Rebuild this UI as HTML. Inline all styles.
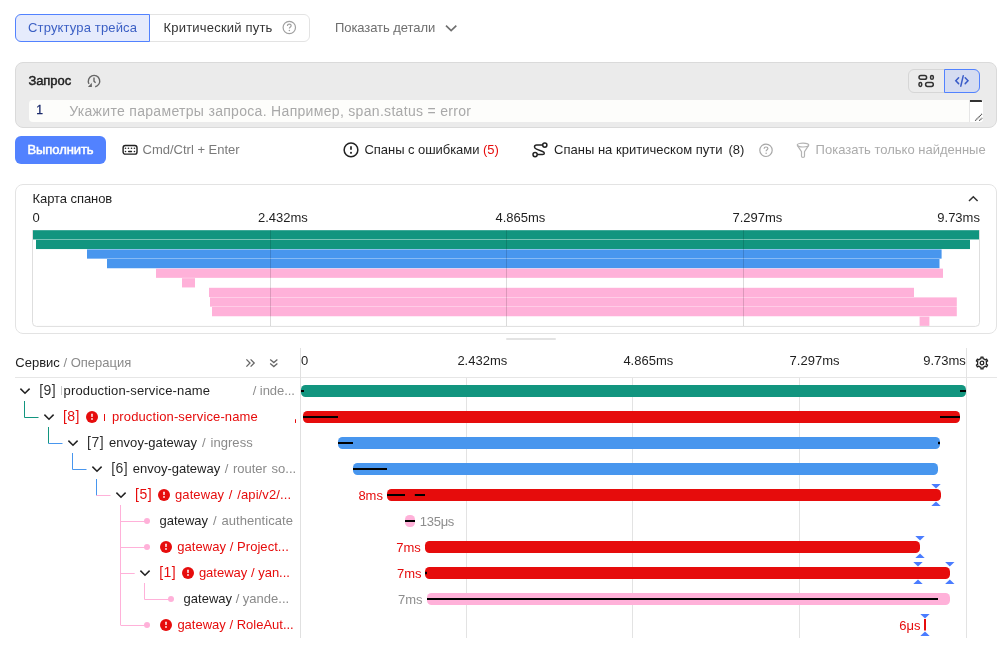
<!DOCTYPE html>
<html><head><meta charset="utf-8">
<style>
*{box-sizing:border-box;margin:0;padding:0}
html,body{width:1008px;height:648px;overflow:hidden;background:#fff;font-family:"Liberation Sans",sans-serif;color:#1f1f1f;font-size:13px}
.a{position:absolute;white-space:nowrap;line-height:16px}
svg{position:absolute;left:0;top:0;overflow:visible}
body{-webkit-font-smoothing:antialiased}
</style></head><body><div style="position:absolute;left:0;top:0;width:1008px;height:648px;will-change:transform">
<div class="a" style="left:15px;top:14px;width:295px;height:28px;border:1px solid #e3e3e3;border-radius:6px"></div>
<div class="a" style="left:15px;top:14px;width:135px;height:28px;background:#e6ebfc;border:1px solid #5282ff;border-radius:6px 0 0 6px"></div>
<div class="a" style="left:28px;top:20.00px;color:#3b5fc4;font-size:13px;font-weight:400;letter-spacing:0.15px">Структура трейса</div>
<div class="a" style="left:163.5px;top:20.00px;color:#333;font-size:13px;font-weight:400;letter-spacing:0.2px">Критический путь</div>
<svg class="a" style="left:282px;top:20.4px" width="15" height="15" viewBox="0 0 15 15"><circle cx="7.3" cy="7.5" r="6.2" fill="none" stroke="#a0a0a0" stroke-width="1.2"/><path d="M5.4 5.9 C5.4 4.8 6.2 4.2 7.3 4.2 C8.4 4.2 9.2 4.9 9.2 5.8 C9.2 6.9 7.4 7 7.4 8.4" fill="none" stroke="#a0a0a0" stroke-width="1.2"/><circle cx="7.4" cy="10.4" r="0.75" fill="#a0a0a0"/></svg>
<div class="a" style="left:335px;top:20.00px;color:#6e6e6e;font-size:13px;font-weight:400;letter-spacing:-0.07px">Показать детали</div>
<svg style="left:444px;top:22px" width="14" height="10" viewBox="0 0 14 10"><path d="M2 3.7 L7.15 8.5 L12.3 3.7" fill="none" stroke="#6f6f6f" stroke-width="1.7"/></svg>
<div class="a" style="left:15px;top:62px;width:982px;height:66px;background:#ebebeb;border:1px solid #dadada;border-radius:8px"></div>
<div class="a" style="left:28.4px;top:73.00px;color:#1f1f1f;font-size:13px;font-weight:400;letter-spacing:-0.05px;-webkit-text-stroke:0.45px #1f1f1f">Запрос</div>
<svg style="left:84px;top:71px" width="20" height="20" viewBox="0 0 20 20"><path d="M11.2 15.7 A5.7 5.7 0 1 0 5.0 12.8" fill="none" stroke="#666" stroke-width="1.4"/><path d="M3.9 16 H7.9 V11.8 Z" fill="#666"/><path d="M10 6.6 V10.2 L11.6 11.8" fill="none" stroke="#666" stroke-width="1.4"/></svg>
<div class="a" style="left:908px;top:69px;width:72px;height:24px;border:1px solid #d6d6d6;border-radius:6px;background:#ececec"></div>
<div class="a" style="left:944px;top:69px;width:36px;height:24px;border:1px solid #5282ff;border-radius:0 6px 6px 0;background:#d5dcf1"></div>
<svg style="left:917px;top:74px" width="20" height="14" viewBox="0 0 20 14"><g fill="none" stroke="#333" stroke-width="1.5"><rect x="2" y="1.5" width="7.6" height="3.8" rx="1.9"/><rect x="13.6" y="1.5" width="2.7" height="3.8" rx="1.35"/><rect x="2" y="8.6" width="2.7" height="3.8" rx="1.35"/><rect x="8.6" y="8.6" width="7.7" height="3.8" rx="1.9"/></g></svg>
<svg style="left:954px;top:74px" width="16" height="14" viewBox="0 0 16 14"><g fill="none" stroke="#3a5cc8" stroke-width="1.5" stroke-linecap="round"><path d="M4.6 3.8 L1.8 6.8 L4.6 9.6"/><path d="M11.2 3.8 L14 6.8 L11.2 9.6"/><path d="M9.2 1.8 L6.8 12.2"/></g></svg>
<div class="a" style="left:28.5px;top:99.5px;width:954.5px;height:22.7px;background:#fdfdfb;border-radius:4px"></div>
<div class="a" style="left:969px;top:100px;width:14px;height:22px;background:#fff;border-left:1px solid #e6e6e6;border-radius:0 3px 3px 0"></div>
<div class="a" style="left:970px;top:100px;width:12px;height:2px;background:#333;border-radius:0 1px 0 0"></div>
<svg style="left:970px;top:112px" width="13" height="10" viewBox="0 0 13 10"><path d="M5.2 8.7 L12 1.9 M9.2 8.7 L12.3 5.9" stroke="#444" stroke-width="1.1" stroke-dasharray="1.2 0.5"/></svg>
<div class="a" style="left:36.3px;top:102.00px;color:#1b2a6b;font-size:12px;font-weight:400;-webkit-text-stroke:0.3px #1b2a6b">1</div>
<div class="a" style="left:69.2px;top:103.00px;color:#a9a9a9;font-size:14px;font-weight:400;letter-spacing:0.31px">Укажите параметры запроса. Например, span.status = error</div>
<div class="a" style="left:15px;top:136px;width:91px;height:28px;background:#5282ff;border-radius:6px"></div>
<div class="a" style="left:27.5px;top:142.00px;color:#fff;font-size:13px;font-weight:400;letter-spacing:-0.08px;-webkit-text-stroke:0.5px #fff">Выполнить</div>
<svg style="left:122px;top:144px" width="16" height="12" viewBox="0 0 16 12"><rect x="1.1" y="1.5" width="13.9" height="8.6" rx="2.2" fill="none" stroke="#222" stroke-width="1.4"/><g fill="#222"><circle cx="3.5" cy="4.3" r="0.8"/><circle cx="6.45" cy="4.3" r="0.8"/><circle cx="9.5" cy="4.3" r="0.8"/><circle cx="12.45" cy="4.3" r="0.8"/><circle cx="3.5" cy="7.5" r="0.8"/><circle cx="12.45" cy="7.5" r="0.8"/></g><path d="M6.6 7.5 H9.5" stroke="#222" stroke-width="1.3" stroke-linecap="round"/></svg>
<div class="a" style="left:142.5px;top:142.00px;color:#7a7a7a;font-size:13px;font-weight:400;">Cmd/Ctrl + Enter</div>
<svg style="left:343px;top:142px" width="16" height="16" viewBox="0 0 16 16"><circle cx="8" cy="7.9" r="6.85" fill="none" stroke="#222" stroke-width="1.5"/><path d="M8 4.2 V7.8" stroke="#222" stroke-width="1.7"/><rect x="7.1" y="9.9" width="1.8" height="1.8" fill="#222"/></svg>
<div class="a" style="left:364.5px;top:142.00px;color:#1f1f1f;font-size:13px;font-weight:400;letter-spacing:-0.05px">Спаны с ошибками&nbsp;<span style="color:#e60c0c">(5)</span></div>
<svg style="left:532px;top:142px" width="16" height="16" viewBox="0 0 16 16"><g fill="none" stroke="#222" stroke-width="1.5"><circle cx="12.8" cy="3.1" r="2.1"/><circle cx="3.1" cy="12.6" r="2.1"/><path d="M10.7 3.1 H4.6 C3.1 3.1 2.5 4 2.5 5 C2.5 6 3.2 6.6 4.5 7.1 L10.6 9.5 C11.8 10 12.3 10.6 12.3 11.3 C12.3 12.1 11.6 12.6 10.5 12.6 H5.2"/></g></svg>
<div class="a" style="left:554px;top:142.00px;color:#1f1f1f;font-size:13px;font-weight:400;letter-spacing:0.02px">Спаны на критическом пути <span style="margin-left:2.3px">(8)</span></div>
<svg style="left:759px;top:142.5px" width="15" height="15" viewBox="0 0 15 15"><circle cx="7" cy="7.3" r="6.2" fill="none" stroke="#a8a8a8" stroke-width="1.2"/><path d="M5.1 5.7 C5.1 4.6 5.9 4 7 4 C8.1 4 8.9 4.7 8.9 5.6 C8.9 6.7 7.1 6.8 7.1 8.2" fill="none" stroke="#a8a8a8" stroke-width="1.2"/><circle cx="7.1" cy="10.2" r="0.75" fill="#a8a8a8"/></svg>
<svg style="left:796px;top:142px" width="16" height="17" viewBox="0 0 16 17"><g fill="none" stroke="#b3b3b3" stroke-width="1.2"><ellipse cx="7" cy="3.1" rx="5.8" ry="1.9"/><path d="M1.5 3.6 L5.5 9.6 V14.2 Q5.5 15.4 7 15.4 Q8.5 15.4 8.5 14.2 V9.6 L12.5 3.6"/></g></svg>
<div class="a" style="left:815.6px;top:142.00px;color:#ababab;font-size:13px;font-weight:400;">Показать только найденные</div>
<div class="a" style="left:15px;top:184px;width:982px;height:150px;border:1px solid #e3e3e3;border-radius:8px"></div>
<div class="a" style="left:32.6px;top:191.00px;color:#1f1f1f;font-size:13px;font-weight:400;letter-spacing:-0.08px">Карта спанов</div>
<svg style="left:966px;top:193px" width="14" height="10" viewBox="0 0 14 10"><path d="M3 8 L7.3 3.7 L11.6 8" fill="none" stroke="#333" stroke-width="1.5"/></svg>
<div class="a" style="left:32.6px;top:210.00px;color:#1f1f1f;font-size:13px;font-weight:400;">0</div>
<div class="a" style="left:258px;top:210.00px;color:#1f1f1f;font-size:13px;font-weight:400;">2.432ms</div>
<div class="a" style="left:495.5px;top:210.00px;color:#1f1f1f;font-size:13px;font-weight:400;">4.865ms</div>
<div class="a" style="left:732.5px;top:210.00px;color:#1f1f1f;font-size:13px;font-weight:400;">7.297ms</div>
<div class="a" style="left:937.3px;top:210.00px;color:#1f1f1f;font-size:13px;font-weight:400;">9.73ms</div>
<svg style="left:0;top:0" width="1008" height="648"><path d="M32.5 230 V322.4 Q32.5 326.4 36.5 326.4 H975.5 Q979.5 326.4 979.5 322.4 V230" fill="none" stroke="#dedede" stroke-width="1"/><rect x="33" y="230.20" width="946.00" height="9.25" fill="#12957f"/><rect x="36" y="239.80" width="934.00" height="9.25" fill="#12957f"/><rect x="87" y="249.40" width="854.60" height="9.25" fill="#4896ee"/><rect x="107" y="259.00" width="832.50" height="9.25" fill="#4896ee"/><rect x="156" y="268.60" width="787.00" height="9.25" fill="#ffb1d9"/><rect x="182" y="278.20" width="13.00" height="9.25" fill="#ffb1d9"/><rect x="209" y="287.80" width="705.00" height="9.25" fill="#ffb1d9"/><rect x="210" y="297.40" width="746.80" height="9.25" fill="#ffb1d9"/><rect x="212" y="307.00" width="744.80" height="9.25" fill="#ffb1d9"/><rect x="919.6" y="316.60" width="9.80" height="9.25" fill="#ffb1d9"/><line x1="270.5" y1="230" x2="270.5" y2="326" stroke="rgba(0,0,0,0.14)" stroke-width="1"/><line x1="506.5" y1="230" x2="506.5" y2="326" stroke="rgba(0,0,0,0.14)" stroke-width="1"/><line x1="743.5" y1="230" x2="743.5" y2="326" stroke="rgba(0,0,0,0.14)" stroke-width="1"/></svg>
<div class="a" style="left:506px;top:338px;width:50px;height:2px;background:#e3e3e3;border-radius:1px"></div>
<div class="a" style="left:15.3px;top:355.00px;color:#1f1f1f;font-size:13px;font-weight:400;">Сервис <span style="color:#8a8a8a">/ Операция</span></div>
<svg style="left:244px;top:357px" width="14" height="12" viewBox="0 0 14 12"><g fill="none" stroke="#666" stroke-width="1.3"><path d="M2.4 2.4 L6 6 L2.4 9.6"/><path d="M6.6 2.4 L10.2 6 L6.6 9.6"/></g></svg>
<svg style="left:268px;top:357px" width="12" height="12" viewBox="0 0 12 12"><g fill="none" stroke="#666" stroke-width="1.3"><path d="M2.2 2.6 L5.8 5.6 L9.4 2.6"/><path d="M2.2 6.6 L5.8 9.6 L9.4 6.6"/></g></svg>
<div class="a" style="left:301px;top:353.00px;color:#1f1f1f;font-size:13px;font-weight:400;">0</div>
<div class="a" style="left:457.4px;top:353.00px;color:#1f1f1f;font-size:13px;font-weight:400;">2.432ms</div>
<div class="a" style="left:623.4px;top:353.00px;color:#1f1f1f;font-size:13px;font-weight:400;">4.865ms</div>
<div class="a" style="left:789.6px;top:353.00px;color:#1f1f1f;font-size:13px;font-weight:400;">7.297ms</div>
<div class="a" style="left:923.2px;top:353.00px;color:#1f1f1f;font-size:13px;font-weight:400;">9.73ms</div>
<svg style="left:975px;top:356px" width="14" height="14" viewBox="0 0 14 14"><path d="M4.75 3.10 L5.99 2.62 L5.96 1.09 L8.04 1.09 L8.01 2.62 L9.25 3.10 L10.29 3.93 L11.60 3.14 L12.64 4.95 L11.30 5.68 L11.50 7.00 L11.30 8.32 L12.64 9.05 L11.60 10.86 L10.29 10.07 L9.25 10.90 L8.01 11.38 L8.04 12.91 L5.96 12.91 L5.99 11.38 L4.75 10.90 L3.71 10.07 L2.40 10.86 L1.36 9.05 L2.70 8.32 L2.50 7.00 L2.70 5.68 L1.36 4.95 L2.40 3.14 L3.71 3.93 Z" fill="none" stroke="#222" stroke-width="1.3" stroke-linejoin="round"/><circle cx="7" cy="7" r="1.8" fill="none" stroke="#222" stroke-width="1.3"/></svg>
<svg style="left:0;top:0" width="1008" height="648"><line x1="15" y1="377.5" x2="997" y2="377.5" stroke="#e6e6e6" stroke-width="1"/><line x1="300.5" y1="348" x2="300.5" y2="638" stroke="#e0e0e0" stroke-width="1"/><line x1="466.5" y1="378" x2="466.5" y2="638" stroke="#e3e3e3" stroke-width="1"/><line x1="632.5" y1="378" x2="632.5" y2="638" stroke="#e3e3e3" stroke-width="1"/><line x1="799.5" y1="378" x2="799.5" y2="638" stroke="#e3e3e3" stroke-width="1"/><line x1="966.5" y1="348" x2="966.5" y2="638" stroke="#e3e3e3" stroke-width="1"/><line x1="24.5" y1="401" x2="24.5" y2="417.5" stroke="#12957f" stroke-width="1"/><line x1="24.5" y1="417.5" x2="38.5" y2="417.5" stroke="#12957f" stroke-width="1"/><line x1="48.5" y1="427" x2="48.5" y2="443.5" stroke="#12957f" stroke-width="1"/><line x1="48.5" y1="443.5" x2="62.5" y2="443.5" stroke="#4896ee" stroke-width="1"/><line x1="72.5" y1="453" x2="72.5" y2="469.5" stroke="#4896ee" stroke-width="1"/><line x1="72.5" y1="469.5" x2="86.5" y2="469.5" stroke="#4896ee" stroke-width="1"/><line x1="96.5" y1="479" x2="96.5" y2="495.5" stroke="#4896ee" stroke-width="1"/><line x1="96.5" y1="495.5" x2="110.5" y2="495.5" stroke="#ffb1d9" stroke-width="1"/><line x1="120.5" y1="505" x2="120.5" y2="625" stroke="#ffb1d9" stroke-width="1"/><line x1="120.5" y1="521.5" x2="145" y2="521.5" stroke="#ffb1d9" stroke-width="1"/><circle cx="147" cy="521" r="3" fill="#ffb1d9"/><line x1="120.5" y1="547.5" x2="145" y2="547.5" stroke="#ffb1d9" stroke-width="1"/><circle cx="147" cy="547" r="3" fill="#ffb1d9"/><line x1="120.5" y1="625.5" x2="145" y2="625.5" stroke="#ffb1d9" stroke-width="1"/><circle cx="147" cy="625" r="3" fill="#ffb1d9"/><line x1="120.5" y1="573.5" x2="134.7" y2="573.5" stroke="#ffb1d9" stroke-width="1"/><line x1="144.5" y1="583" x2="144.5" y2="599.5" stroke="#ffb1d9" stroke-width="1"/><line x1="144.5" y1="599.5" x2="169" y2="599.5" stroke="#ffb1d9" stroke-width="1"/><circle cx="171" cy="599" r="3" fill="#ffb1d9"/><path d="M20.4 388.6 L25 393.2 L29.6 388.6" fill="none" stroke="#222" stroke-width="1.5"/><path d="M44.4 414.6 L49 419.2 L53.6 414.6" fill="none" stroke="#222" stroke-width="1.5"/><path d="M68.4 440.6 L73 445.2 L77.6 440.6" fill="none" stroke="#222" stroke-width="1.5"/><path d="M92.4 466.6 L97 471.2 L101.6 466.6" fill="none" stroke="#222" stroke-width="1.5"/><path d="M116.4 492.6 L121 497.2 L125.6 492.6" fill="none" stroke="#222" stroke-width="1.5"/><path d="M140.4 570.6 L145 575.2 L149.6 570.6" fill="none" stroke="#222" stroke-width="1.5"/><circle cx="92" cy="417" r="6" fill="#e60c0c"/><path d="M91.2 413.7 H92.8 L92.6 416.95 H91.4 Z" fill="#fff"/><rect x="91.3" y="418.05" width="1.4" height="1.85" fill="#fff"/><circle cx="164" cy="495" r="6" fill="#e60c0c"/><path d="M163.2 491.7 H164.8 L164.6 494.95 H163.4 Z" fill="#fff"/><rect x="163.3" y="496.05" width="1.4" height="1.85" fill="#fff"/><circle cx="166" cy="547" r="6" fill="#e60c0c"/><path d="M165.2 543.7 H166.8 L166.6 546.95 H165.4 Z" fill="#fff"/><rect x="165.3" y="548.05" width="1.4" height="1.85" fill="#fff"/><circle cx="188" cy="573" r="6" fill="#e60c0c"/><path d="M187.2 569.7 H188.8 L188.6 572.95 H187.4 Z" fill="#fff"/><rect x="187.3" y="574.05" width="1.4" height="1.85" fill="#fff"/><circle cx="166" cy="625" r="6" fill="#e60c0c"/><path d="M165.2 621.7 H166.8 L166.6 624.95 H165.4 Z" fill="#fff"/><rect x="165.3" y="626.05" width="1.4" height="1.85" fill="#fff"/><rect x="301" y="385" width="665" height="12" rx="4.5" fill="#12957f"/><rect x="301" y="390" width="3" height="2" fill="#000"/><rect x="960" y="390" width="6" height="2" fill="#000"/><rect x="303" y="411" width="657" height="12" rx="4.5" fill="#e60c0c"/><rect x="303" y="416" width="35" height="2" fill="#000"/><rect x="940" y="416" width="20" height="2" fill="#000"/><rect x="338" y="437" width="602" height="12" rx="4.5" fill="#4896ee"/><rect x="338" y="442" width="15" height="2" fill="#000"/><rect x="938" y="441.8" width="2" height="2.4" fill="#000"/><rect x="353" y="463" width="585" height="12" rx="4.5" fill="#4896ee"/><rect x="353" y="468" width="34" height="2" fill="#000"/><rect x="387" y="489" width="554" height="12" rx="4.5" fill="#e60c0c"/><rect x="387" y="494" width="18" height="2" fill="#000"/><rect x="414.8" y="494" width="10.199999999999989" height="2" fill="#000"/><path d="M931.3 484 H940.7 L936 488.4 Z" fill="#4a7cff"/><path d="M931.3 506 H940.7 L936 501.6 Z" fill="#4a7cff"/><rect x="405" y="515" width="10" height="12" rx="4.5" fill="#ffb1d9"/><rect x="405" y="520" width="10" height="2" fill="#000"/><rect x="425" y="541" width="495" height="12" rx="4.5" fill="#e60c0c"/><path d="M915.3 536 H924.7 L920 540.4 Z" fill="#4a7cff"/><path d="M915.3 558 H924.7 L920 553.6 Z" fill="#4a7cff"/><rect x="425" y="567" width="525" height="12" rx="4.5" fill="#e60c0c"/><rect x="425" y="571.8" width="2" height="2.4" fill="#000"/><path d="M913.3 562 H922.7 L918 566.4 Z" fill="#4a7cff"/><path d="M913.3 584 H922.7 L918 579.6 Z" fill="#4a7cff"/><path d="M945.0999999999999 562 H954.5 L949.8 566.4 Z" fill="#4a7cff"/><path d="M945.0999999999999 584 H954.5 L949.8 579.6 Z" fill="#4a7cff"/><rect x="427" y="593" width="523" height="12" rx="4.5" fill="#ffb1d9"/><rect x="427" y="598" width="511" height="2" fill="#000"/><rect x="924" y="619" width="2" height="11.5" fill="#e60c0c"/><path d="M920.3 614 H929.7 L925 618.4 Z" fill="#4a7cff"/><path d="M920.3 636 H929.7 L925 631.6 Z" fill="#4a7cff"/></svg>
<div class="a" style="left:39.2px;top:382.00px;color:#333;font-size:14px;font-weight:400;letter-spacing:0.5px">[9]</div>
<div class="a" style="left:61px;top:386px;width:1px;height:9px;background:#c8c8c8"></div>
<div class="a" style="left:63.5px;top:383.00px;color:#1f1f1f;font-size:13px;font-weight:400;letter-spacing:0.16px">production-service-name</div>
<div class="a" style="left:252.7px;top:383.00px;color:#8d8d8d;font-size:13px;font-weight:400;letter-spacing:-0.05px">/ inde...</div>
<div class="a" style="left:62.9px;top:408.00px;color:#e60c0c;font-size:14px;font-weight:400;letter-spacing:0.5px">[8]</div>
<div class="a" style="left:103.6px;top:414px;width:1.3px;height:7px;background:#e60c0c"></div>
<div class="a" style="left:112px;top:409.00px;color:#e60c0c;font-size:13px;font-weight:400;letter-spacing:0.12px">production-service-name</div>
<div class="a" style="left:295px;top:418.5px;width:1.1px;height:4px;border-radius:1px;background:#e60c0c"></div>
<div class="a" style="left:87.1px;top:434.00px;color:#333;font-size:14px;font-weight:400;letter-spacing:0.5px">[7]</div>
<div class="a" style="left:109px;top:435.00px;color:#1f1f1f;font-size:13px;font-weight:400;letter-spacing:0.05px;word-spacing:1.2px">envoy-gateway <span style="color:#8a8a8a">/ ingress</span></div>
<div class="a" style="left:111.2px;top:460.00px;color:#333;font-size:14px;font-weight:400;letter-spacing:0.5px">[6]</div>
<div class="a" style="left:132.7px;top:461.00px;color:#1f1f1f;font-size:13px;font-weight:400;letter-spacing:0.0px;word-spacing:1.0px">envoy-gateway <span style="color:#8a8a8a">/ router so...</span></div>
<div class="a" style="left:135.0px;top:486.00px;color:#e60c0c;font-size:14px;font-weight:400;letter-spacing:0.5px">[5]</div>
<div class="a" style="left:175px;top:487.00px;color:#e60c0c;font-size:13px;font-weight:400;letter-spacing:0.1px;word-spacing:1.0px">gateway / /api/v2/...</div>
<div class="a" style="left:358.4px;top:488.00px;color:#e60c0c;font-size:13px;font-weight:400;">8ms</div>
<div class="a" style="left:159.4px;top:513.00px;color:#1f1f1f;font-size:13px;font-weight:400;letter-spacing:0.05px;word-spacing:1.2px">gateway <span style="color:#8a8a8a">/ authenticate</span></div>
<div class="a" style="left:419.7px;top:514.00px;color:#8d8d8d;font-size:13px;font-weight:400;letter-spacing:-0.25px">135μs</div>
<div class="a" style="left:177.3px;top:539.00px;color:#e60c0c;font-size:13px;font-weight:400;letter-spacing:0.05px">gateway / Project...</div>
<div class="a" style="left:396.3px;top:540.00px;color:#e60c0c;font-size:13px;font-weight:400;">7ms</div>
<div class="a" style="left:159.2px;top:564.00px;color:#e60c0c;font-size:14px;font-weight:400;letter-spacing:0.5px">[1]</div>
<div class="a" style="left:198.9px;top:565.00px;color:#e60c0c;font-size:13px;font-weight:400;letter-spacing:0.0px">gateway / yan...</div>
<div class="a" style="left:397px;top:566.00px;color:#e60c0c;font-size:13px;font-weight:400;">7ms</div>
<div class="a" style="left:183.6px;top:591.00px;color:#1f1f1f;font-size:13px;font-weight:400;letter-spacing:0.0px">gateway <span style="color:#8a8a8a">/ yande...</span></div>
<div class="a" style="left:398px;top:592.00px;color:#8d8d8d;font-size:13px;font-weight:400;">7ms</div>
<div class="a" style="left:177.4px;top:617.00px;color:#e60c0c;font-size:13px;font-weight:400;letter-spacing:0.0px">gateway / RoleAut...</div>
<div class="a" style="left:899.3px;top:618.00px;color:#e60c0c;font-size:13px;font-weight:400;">6μs</div>
</div></body></html>
